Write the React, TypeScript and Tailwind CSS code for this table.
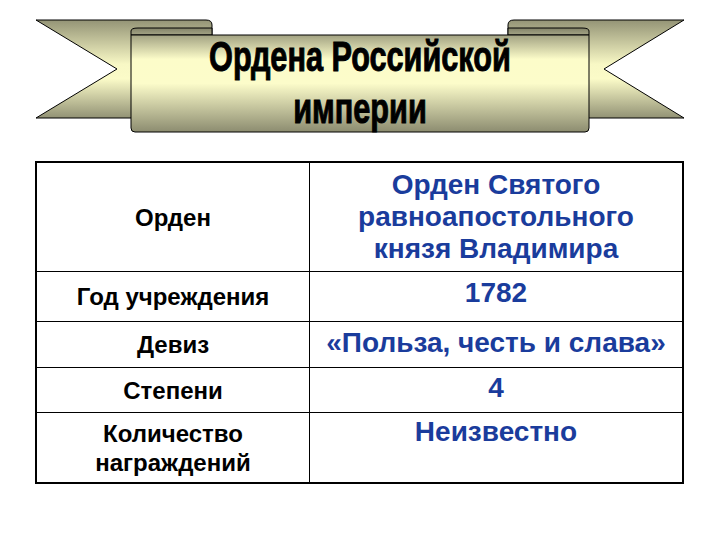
import React from 'react';

const rows = [
  { label: ['Орден'], value: ['Орден Святого', 'равноапостольного', 'князя Владимира'], h: 'h-[108px]', pt: 'pt-[6px]', first: true },
  { label: ['Год учреждения'], value: ['1782'], h: 'h-[50px]', pt: 'pt-[5px]' },
  { label: ['Девиз'], value: ['«Польза, честь и слава»'], h: 'h-[46px]', pt: 'pt-[5px]' },
  { label: ['Степени'], value: ['4'], h: 'h-[45px]', pt: 'pt-[4px]' },
  { label: ['Количество', 'награждений'], value: ['Неизвестно'], h: 'h-[70px]', pt: 'pt-[3px]' },
];

function Ribbon() {
  return (
    <svg className="absolute top-0 left-0" width="720" height="150" viewBox="0 0 720 150">
      <defs>
        <linearGradient id="band" x1="0" y1="35" x2="0" y2="132" gradientUnits="userSpaceOnUse">
          <stop offset="0" stopColor="#a2a282" />
          <stop offset="0.25" stopColor="#fcfcc9" />
          <stop offset="0.5" stopColor="#fcfcca" />
          <stop offset="1" stopColor="#8c8c70" />
        </linearGradient>
        <linearGradient id="tail" x1="0" y1="20" x2="0" y2="118" gradientUnits="userSpaceOnUse">
          <stop offset="0" stopColor="#949476" />
          <stop offset="0.45" stopColor="#f8f8c5" />
          <stop offset="0.6" stopColor="#fbfbc8" />
          <stop offset="1" stopColor="#929275" />
        </linearGradient>
        <linearGradient id="fold" x1="0" y1="27" x2="0" y2="36" gradientUnits="userSpaceOnUse">
          <stop offset="0" stopColor="#7e7e64" />
          <stop offset="1" stopColor="#a9a98a" />
        </linearGradient>
      </defs>
      {/* tails */}
      <path d="M36 20 H206 Q212 20 212 25 V118 H36 L117 69 Z" fill="url(#tail)" stroke="#000" strokeWidth="1" />
      <path d="M684 20 H514 Q508 20 508 25 V118 H684 L604 69 Z" fill="url(#tail)" stroke="#000" strokeWidth="1" />
      {/* folds */}
      <path d="M131 35 V31 Q131 28 138 28 H212 V35 Z" fill="url(#fold)" stroke="#000" strokeWidth="1" />
      <path d="M589 35 V31 Q589 28 582 28 H508 V35 Z" fill="url(#fold)" stroke="#000" strokeWidth="1" />
      {/* main band */}
      <path d="M131 35 H589 V128 Q589 132 585 132 H135 Q131 132 131 128 Z" fill="url(#band)" stroke="#000" strokeWidth="1" />
    </svg>
  );
}

export default function App() {
  return (
    <div className="w-[720px] h-[540px] bg-white overflow-hidden">
      {/* Title banner */}
      <div className="relative h-[150px]">
        <Ribbon />
        <div className="relative pt-[31px] text-center text-[42px] leading-[52px] font-bold text-black font-['Liberation_Sans',sans-serif] scale-x-[0.73] [-webkit-text-stroke:1px_black]">
          <div>Ордена Российской</div>
          <div>империи</div>
        </div>
      </div>

      {/* Table */}
      <div className="ml-[35px] mt-[11px] w-[649px] border-2 border-black font-['Liberation_Sans',sans-serif] font-bold">
        {rows.map((r, i) => (
          <div key={i} className={`flex ${r.h} ${r.first ? '' : 'border-t border-black'}`}>
            <div className="w-[272px] flex flex-col items-center justify-center text-center text-[24px] leading-[29px] text-black">
              {r.label.map((l) => (
                <div key={l}>{l}</div>
              ))}
            </div>
            <div className={`flex-1 border-l border-black text-center text-[28px] leading-[32px] text-[#1a3c9c] ${r.pt}`}>
              {r.value.map((v) => (
                <div key={v}>{v}</div>
              ))}
            </div>
          </div>
        ))}
      </div>
    </div>
  );
}
